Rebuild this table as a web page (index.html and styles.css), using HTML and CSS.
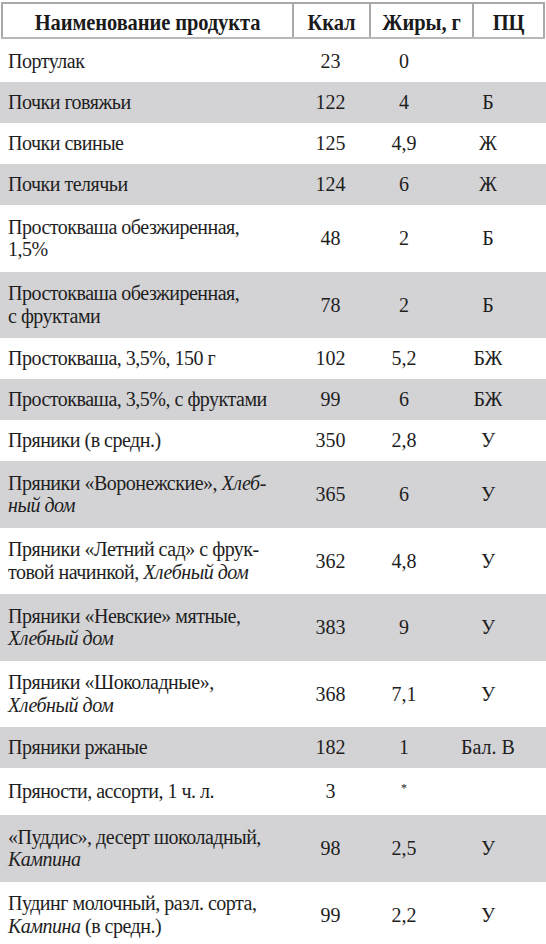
FILE: index.html
```html
<!DOCTYPE html>
<html lang="ru">
<head>
<meta charset="utf-8">
<link rel="stylesheet" href="styles.css">
</head>
<body>
<div class="table">
  <div class="head">
    <div class="hcell"><span class="ht">Наименование продукта</span></div>
    <div class="hcell"><span class="ht">Ккал</span></div>
    <div class="hcell"><span class="ht">Жиры, г</span></div>
    <div class="hcell"><span class="ht">ПЦ</span></div>
  </div>
  <div class="row"><div class="name">Портулак</div><div class="num">23</div><div class="num">0</div><div class="num"></div></div>
  <div class="row alt"><div class="name">Почки говяжьи</div><div class="num">122</div><div class="num">4</div><div class="num">Б</div></div>
  <div class="row"><div class="name">Почки свиные</div><div class="num">125</div><div class="num">4,9</div><div class="num">Ж</div></div>
  <div class="row alt"><div class="name">Почки телячьи</div><div class="num">124</div><div class="num">6</div><div class="num">Ж</div></div>
  <div class="row two"><div class="name">Простокваша обезжиренная,<br>1,5%</div><div class="num">48</div><div class="num">2</div><div class="num">Б</div></div>
  <div class="row two alt"><div class="name">Простокваша обезжиренная,<br>с фруктами</div><div class="num">78</div><div class="num">2</div><div class="num">Б</div></div>
  <div class="row"><div class="name">Простокваша, 3,5%, 150 г</div><div class="num">102</div><div class="num">5,2</div><div class="num">БЖ</div></div>
  <div class="row alt"><div class="name">Простокваша, 3,5%, с фруктами</div><div class="num">99</div><div class="num">6</div><div class="num">БЖ</div></div>
  <div class="row"><div class="name">Пряники (в средн.)</div><div class="num">350</div><div class="num">2,8</div><div class="num">У</div></div>
  <div class="row two alt"><div class="name">Пряники «Воронежские», <i>Хлеб-<br>ный дом</i></div><div class="num">365</div><div class="num">6</div><div class="num">У</div></div>
  <div class="row two"><div class="name">Пряники «Летний сад» с фрук-<br>товой начинкой, <i>Хлебный дом</i></div><div class="num">362</div><div class="num">4,8</div><div class="num">У</div></div>
  <div class="row two alt"><div class="name">Пряники «Невские» мятные,<br><i>Хлебный дом</i></div><div class="num">383</div><div class="num">9</div><div class="num">У</div></div>
  <div class="row two"><div class="name">Пряники «Шоколадные»,<br><i>Хлебный дом</i></div><div class="num">368</div><div class="num">7,1</div><div class="num">У</div></div>
  <div class="row alt"><div class="name">Пряники ржаные</div><div class="num">182</div><div class="num">1</div><div class="num">Бал. В</div></div>
  <div class="row"><div class="name">Пряности, ассорти, 1 ч. л.</div><div class="num">3</div><div class="num"><span class="star">*</span></div><div class="num"></div></div>
  <div class="row two alt"><div class="name">«Пуддис», десерт шоколадный,<br><i>Кампина</i></div><div class="num">98</div><div class="num">2,5</div><div class="num">У</div></div>
  <div class="row two last"><div class="name">Пудинг молочный, разл. сорта,<br><i>Кампина</i> (в средн.)</div><div class="num">99</div><div class="num">2,2</div><div class="num">У</div></div>
</div>
</body>
</html>
```

FILE: styles.css
```css
html, body {
  margin: 0;
  padding: 0;
  background: #ffffff;
}
body {
  width: 546px;
  font-family: "Liberation Serif", "Times New Roman", serif;
  color: #1e1e1e;
}
.table {
  display: flex;
  flex-direction: column;
}
.head {
  display: grid;
  grid-template-columns: 291px 77px 103px 73px;
  margin: 2px 1px 2px 1px;
  border-top: 2px solid #a9a9a9;
  border-bottom: 2px solid #b8b8b8;
}
.hcell {
  box-sizing: border-box;
  border-left: 2px solid #a9a9a9;
  height: 33px;
  padding-top: 3px;
  line-height: 30px;
  text-align: center;
  font-weight: bold;
  font-size: 20.5px;
  letter-spacing: -0.1px;
  color: #1a1a1a;
}
.hcell:last-child {
  border-right: 2px solid #a9a9a9;
}
.ht {
  display: inline-block;
  transform: scaleY(1.15);
}
.row {
  display: grid;
  grid-template-columns: 292px 77px 70px 98px;
  align-items: center;
  padding: 9.25px 0;
  font-size: 20px;
  line-height: 22.5px;
  letter-spacing: -0.5px;
}
.row.two {
  padding: 10.75px 0;
}
.row.alt {
  background: #d3d3d5;
}
.row.last {
  border-bottom: 2px solid #dcdcdc;
}
.name {
  padding-left: 8px;
  white-space: nowrap;
}
.num {
  text-align: center;
  letter-spacing: 0;
}
.star {
  font-size: 12px;
  vertical-align: 9px;
}
```
